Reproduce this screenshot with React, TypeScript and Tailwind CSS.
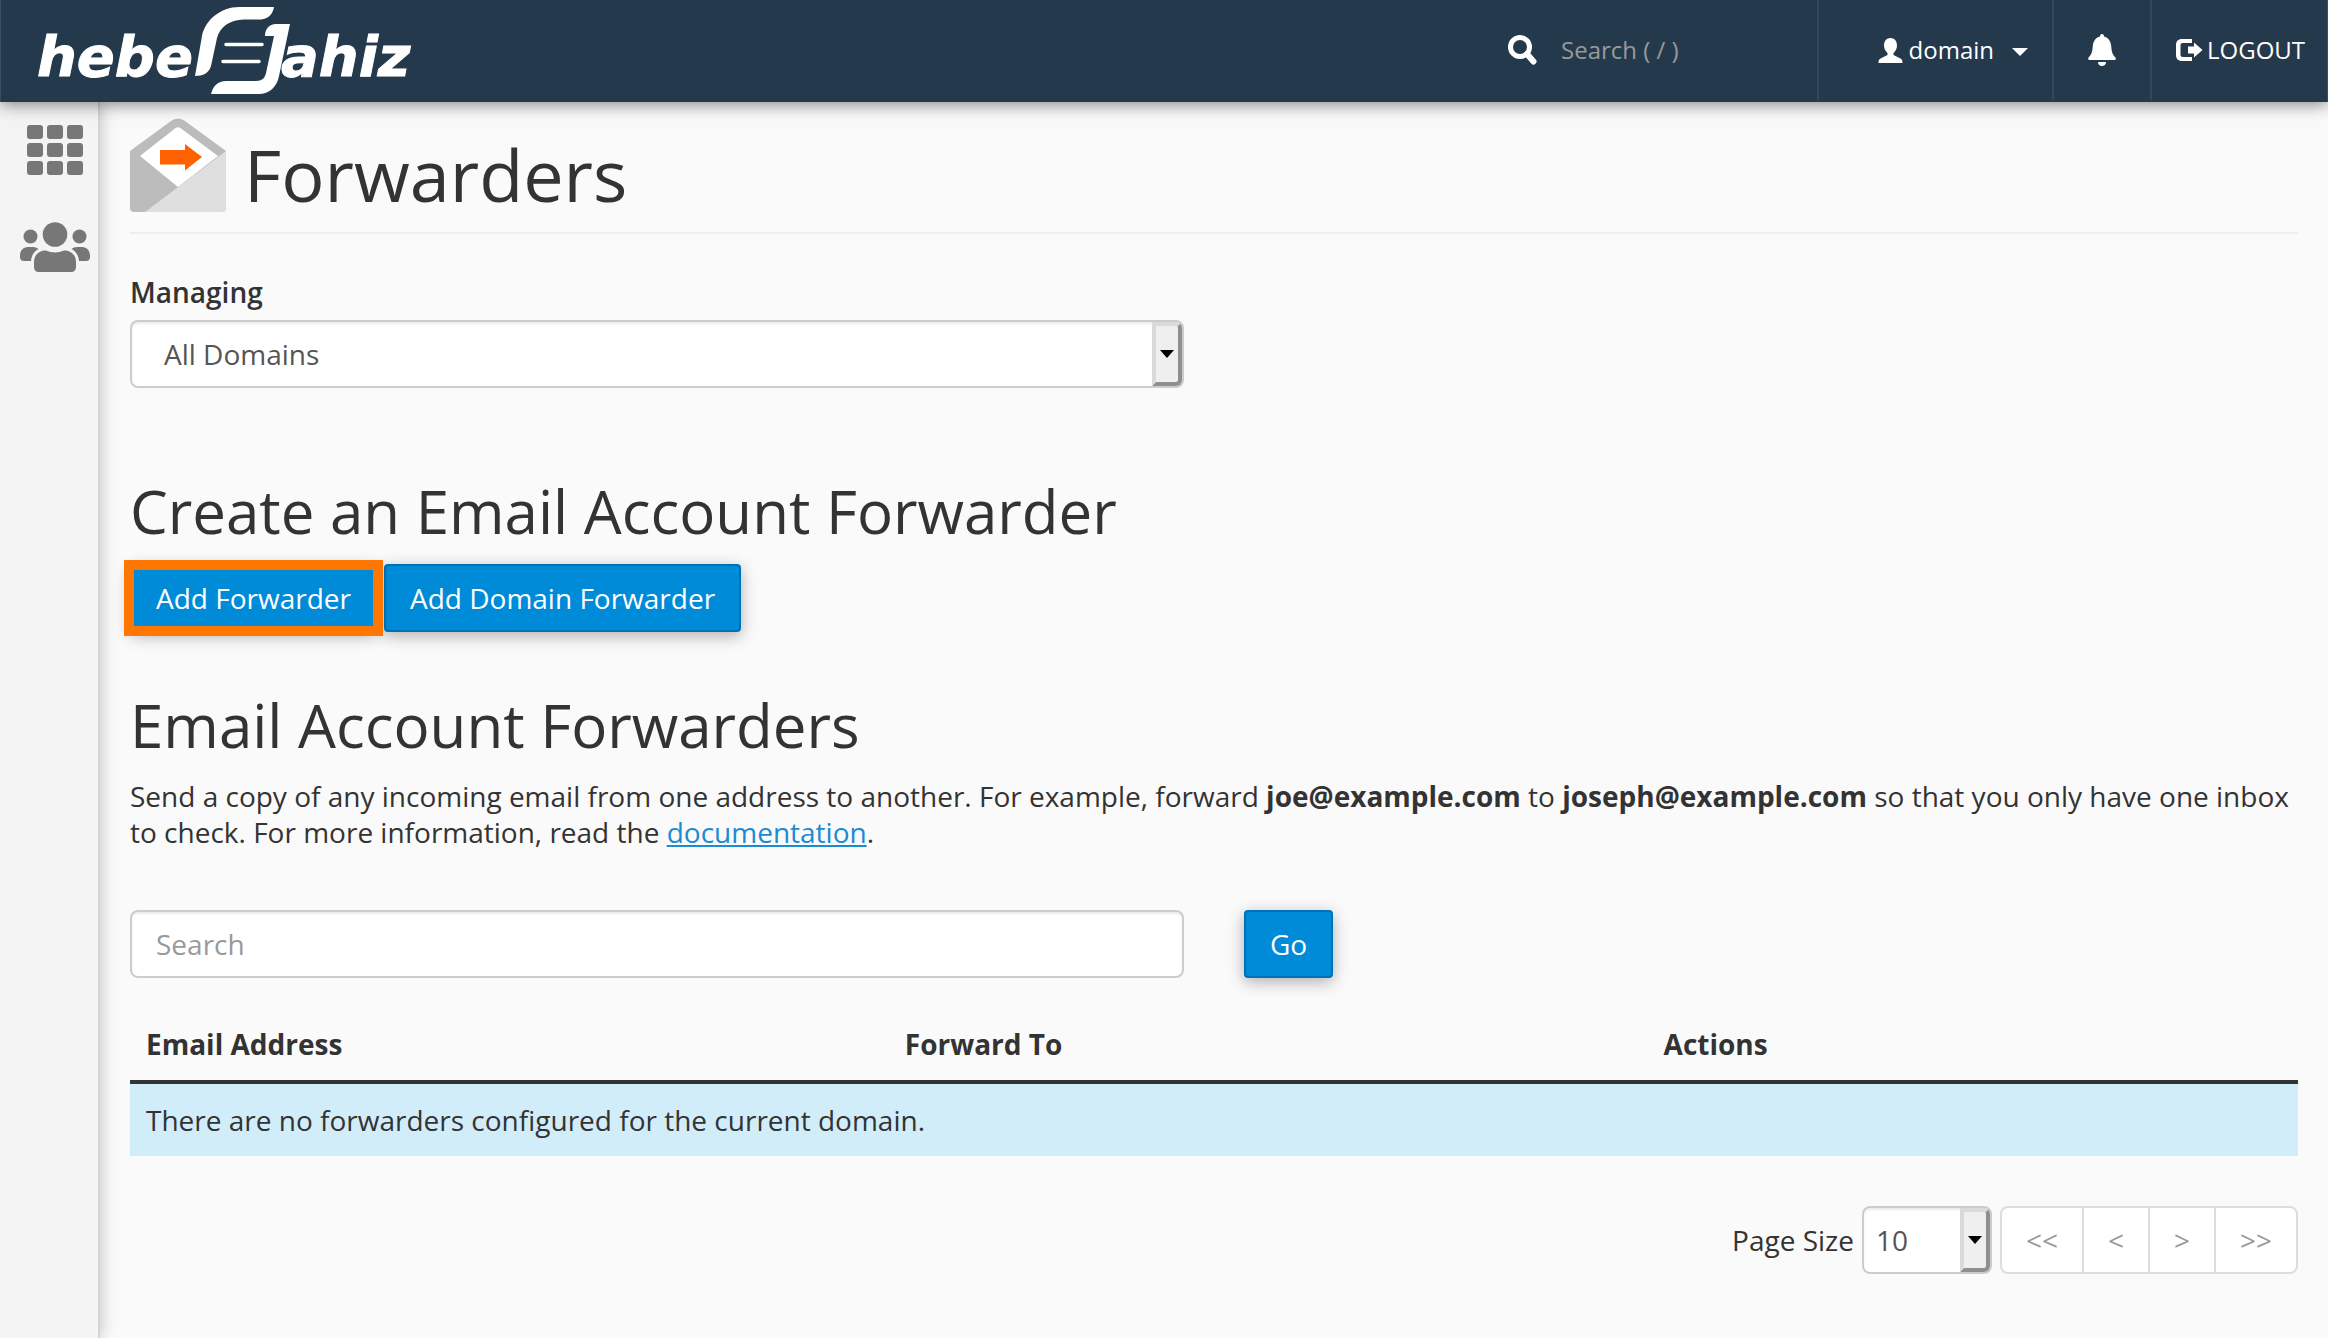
import React from "react";

const control =
  "block h-[68px] w-full appearance-none rounded-lg border-2 border-[#ccc] bg-white text-[28px] leading-9 text-[#555] shadow-[inset_0_2px_2px_rgba(0,0,0,0.075)] outline-none";
const primary =
  "h-[68px] rounded border-2 border-[#0071b7] bg-[#008bd8] px-6 text-[28px] leading-9 text-white shadow-[0_4px_16px_rgba(0,0,0,0.3)]";

function Logo() {
  return (
    <a href="#" aria-label="hebergjahiz" className="block">
      <svg width="420" height="100" viewBox="0 0 420 100" fill="#fff">
        <g
          fontFamily="DejaVu Sans, sans-serif"
          fontWeight="bold"
          fontStyle="italic"
          fontSize="56"
          stroke="#fff"
          strokeWidth="1"
        >
          <text x="36" y="76">
            hebe
          </text>
          <text x="280" y="76">
            ahiz
          </text>
        </g>
        <path d="M194 76 L201 36 C204 20 220 7 238 7 H273 C272 14 267 19 260 19.500 H243 C228 20 219 27 216 38 L210 66 C208 73 202 76 194 76 Z" />
        <path d="M264 36 C264 29 268 24 275 24 H289 L278 76 C276 87 268 94 258 94 H210 C212 86 217 81 225 81 H255 C261 81 264 78 265 73 L273 36 Z" />
        <path d="M225 44.500 H261 M222 61.500 H258" stroke="#fff" strokeWidth="3.500" strokeLinecap="round" />
      </svg>
    </a>
  );
}

function SearchIcon() {
  return (
    <svg width="30" height="30" viewBox="0 0 30 30" fill="none" stroke="#fff">
      <circle cx="13" cy="12" r="9.500" strokeWidth="5" />
      <path d="M20 19 L26.500 26.500" strokeWidth="6" strokeLinecap="round" />
    </svg>
  );
}

function UserIcon() {
  return (
    <svg width="25" height="25" viewBox="0 0 25 25" fill="#fff">
      <path d="M12.500 0 C16.500 0 19 3 19 7.500 C19 10.500 17.500 13.500 15.500 15 V17 L22.500 20.500 C24 21.300 24.500 22.500 24.500 25 H.5 C.5 22.500 1 21.300 2.500 20.500 L9.500 17 V15 C7.500 13.500 6 10.500 6 7.500 C6 3 8.500 0 12.500 0 Z" />
    </svg>
  );
}

function BellIcon() {
  return (
    <svg width="28" height="32" viewBox="0 0 28 32" fill="#fff">
      <path d="M14 0 C15.400 0 16 1 16 2.600 C20.500 3.600 22.800 7.500 23.200 12 C23.700 18 24.500 20.500 27 23 C28.300 24.300 28.300 26 26.500 26 H1.500 C-.3 26 -.3 24.300 1 23 C3.500 20.500 4.300 18 4.800 12 C5.200 7.500 7.500 3.600 12 2.600 C12 1 12.600 0 14 0 Z M10 28 H18 C18 30.500 16.200 32 14 32 C11.800 32 10 30.500 10 28 Z" />
    </svg>
  );
}

function LogoutIcon() {
  return (
    <svg width="27" height="22" viewBox="0 0 27 22" fill="#fff">
      <path d="M16 0 V4 H7 C5.300 4 4.500 4.800 4.500 6.500 V15.500 C4.500 17.200 5.300 18 7 18 H16 V22 H6 C2.200 22 0 19.800 0 16 V6 C0 2.200 2.200 0 6 0 Z" />
      <path d="M18 3.500 L26.500 11 L18 18.500 V14.500 H12 V7.500 H18 Z" />
    </svg>
  );
}

function GridIcon() {
  return (
    <svg width="56" height="50" viewBox="0 0 56 50" fill="#777">
      {[0, 18, 36].map((y) =>
        [0, 20, 40].map((x) => <rect key={`${x}-${y}`} x={x} y={y} width="16" height="14" rx="3" />)
      )}
    </svg>
  );
}

function UsersIcon() {
  return (
    <svg width="70" height="50" viewBox="0 0 70 50" fill="#777">
      <circle cx="35" cy="12.500" r="12.300" />
      <circle cx="10.500" cy="14.500" r="7" />
      <circle cx="59.500" cy="14.500" r="7" />
      <path d="M14 43 V40 C14 33 19 28.500 26 28.500 C31.500 31 38.500 31 44 28.500 C51 28.500 56 33 56 40 V45 C56 48 54 50 51 50 H19 C16 50 14 48 14 45 Z" />
      <path d="M0 34 C0 28.500 3 25 8 25 H13 C15 25 17 25.700 18.500 27 C14 29.500 11.500 33.500 11 39 H4 C1.500 39 0 37.500 0 35 Z" />
      <path d="M70 34 C70 28.500 67 25 62 25 H57 C55 25 53 25.700 51.500 27 C56 29.500 58.500 33.500 59 39 H66 C68.500 39 70 37.500 70 35 Z" />
    </svg>
  );
}

function EnvelopeIcon() {
  return (
    <svg width="96" height="94" viewBox="0 0 96 94">
      <path d="M0 33 L41 3 Q48 -2 55 3 L96 33 V90 Q96 94 92 94 H4 Q0 94 0 90 Z" fill="#bcbcbc" />
      <path d="M10 38 L45 10.500 Q48 8 51 10.500 L88 38 L48 69 Z" fill="#fff" />
      <path d="M96 33 V90 Q96 94 92 94 H15 Z" fill="#dfdfdf" />
      <path d="M30 32 H55 V26 L72 39 L55 52.500 V46.500 H30 Z" fill="#ff6200" />
    </svg>
  );
}

function SelectArrow() {
  return (
    <span
      aria-hidden="true"
      className="pointer-events-none absolute inset-y-0.5 right-0.5 flex w-[30px] items-center justify-center rounded-r-md border-4 border-t-[#dadada] border-r-[#8f8f8f] border-b-[#8f8f8f] border-l-[#dadada] bg-[#efefef]"
    >
      <svg className="shrink-0" width="14" height="8" viewBox="0 0 14 8">
        <path d="M0 0 H14 L7 8 Z" fill="#000" />
      </svg>
    </span>
  );
}

export default function App() {
  return (
    <div className="flex min-h-screen flex-col bg-[#fafafa] font-['Open_Sans',sans-serif] text-[28px] leading-9 text-[#333]">
      <header className="relative z-10 flex h-[102px] items-stretch justify-between border-x border-[#3b4d5f] bg-[#25394d] text-2xl text-white shadow-[0_2px_16px_rgba(0,0,0,0.5)]">
        <Logo />
        <div className="flex h-[100px]">
          <label className="flex w-[310px] items-center gap-6">
            <SearchIcon />
            <input
              type="text"
              aria-label="Search"
              placeholder="Search ( / )"
              className="w-56 bg-transparent outline-none placeholder:text-[#999]"
            />
          </label>
          <button className="flex w-[235px] items-center justify-end border-l-2 border-[#33475a] pr-6">
            <UserIcon />
            <span className="ml-1.5">domain</span>
            <svg className="mt-1 ml-[18px]" width="16" height="8" viewBox="0 0 16 8">
              <path d="M0 0 H16 L8 8 Z" fill="#fff" />
            </svg>
          </button>
          <button aria-label="Notifications" className="flex w-[98px] items-center justify-center border-l-2 border-[#33475a]">
            <BellIcon />
          </button>
          <a href="#" className="flex w-[177px] items-center gap-1 border-l-2 border-[#33475a] pl-6">
            <LogoutIcon />
            LOGOUT
          </a>
        </div>
      </header>

      <div className="flex flex-1">
        <nav className="flex w-[100px] shrink-0 flex-col items-center gap-[47px] border-r-2 border-[#d5d5d5] bg-[#f4f4f4] pt-[23px] pl-3 shadow-[0_0_16px_rgba(0,0,0,0.25)]">
          <a href="#" aria-label="Home">
            <GridIcon />
          </a>
          <a href="#" aria-label="User manager">
            <UsersIcon />
          </a>
        </nav>

        <main className="flex-1 px-[30px]">
          <div className="flex h-[132px] items-start gap-[18px] border-b-2 border-[#eee] pt-4">
            <EnvelopeIcon />
            <h1 className="pt-1.5 text-[72px] leading-[100px]">Forwarders</h1>
          </div>

          <div className="mt-10 grid grid-cols-2 gap-[60px]">
            <div>
              <label htmlFor="domain" className="block pb-2.5 font-semibold">
                Managing
              </label>
              <div className="relative">
                <select id="domain" className={`${control} pl-8`}>
                  <option>All Domains</option>
                </select>
                <SelectArrow />
              </div>
            </div>
          </div>

          <h2 className="mt-[90px] text-[60px] leading-[66px]">Create an Email Account Forwarder</h2>
          <div className="mt-5 flex gap-[7px]">
            <button className={`${primary} relative`}>
              Add Forwarder
              <span aria-hidden="true" className="absolute -inset-x-2 -inset-y-1.5 border-10 border-[#ff7600]" />
            </button>
            <button className={primary}>Add Domain Forwarder</button>
          </div>

          <h2 className="mt-[60px] text-[60px] leading-[66px]">Email Account Forwarders</h2>
          <p className="mt-5">
            Send a copy of any incoming email from one address to another. For example, forward{" "}
            <strong>joe@example.com</strong> to <strong>joseph@example.com</strong> so that you only have one inbox to
            check. For more information, read the{" "}
            <a href="#" className="text-[#1b8bd2] underline">
              documentation
            </a>
            .
          </p>

          <form className="mt-[60px] grid grid-cols-2 gap-[60px]" onSubmit={(e) => e.preventDefault()}>
            <input type="text" aria-label="Search forwarders" placeholder="Search" className={`${control} px-6 placeholder:text-[#999]`} />
            <div>
              <button className={primary}>Go</button>
            </div>
          </form>

          <table className="mt-8 w-full table-fixed text-left">
            <thead>
              <tr className="border-b-4 border-[#333]">
                <th className="w-[35%] px-4 pt-4 pb-[18px]">Email Address</th>
                <th className="w-[35%] px-4 pt-4 pb-[18px]">Forward To</th>
                <th className="w-[30%] px-4 pt-4 pb-[18px]">Actions</th>
              </tr>
            </thead>
            <tbody>
              <tr className="bg-[#d2edfa]">
                <td colSpan={3} className="px-4 py-[18px]">
                  There are no forwarders configured for the current domain.
                </td>
              </tr>
            </tbody>
          </table>

          <div className="mt-[50px] flex items-center justify-end pb-10">
            <label htmlFor="page-size" className="mr-2">
              Page Size
            </label>
            <div className="relative mr-2 w-[130px]">
              <select id="page-size" className={`${control} pl-3`}>
                <option>10</option>
              </select>
              <SelectArrow />
            </div>
            <div className="flex h-[68px] divide-x-2 divide-[#ddd] rounded-lg border-2 border-[#ddd] bg-white text-[#999]">
              <button className="px-6">&lt;&lt;</button>
              <button className="px-6">&lt;</button>
              <button className="px-6">&gt;</button>
              <button className="px-6">&gt;&gt;</button>
            </div>
          </div>
        </main>
      </div>
    </div>
  );
}
